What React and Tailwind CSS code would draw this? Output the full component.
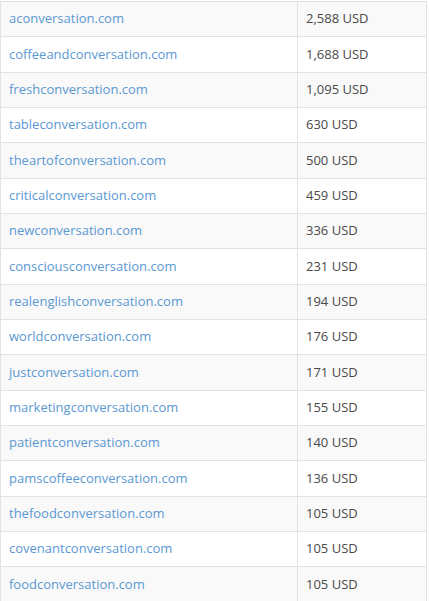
const rows = [
  ["aconversation.com", "2,588 USD"],
  ["coffeeandconversation.com", "1,688 USD"],
  ["freshconversation.com", "1,095 USD"],
  ["tableconversation.com", "630 USD"],
  ["theartofconversation.com", "500 USD"],
  ["criticalconversation.com", "459 USD"],
  ["newconversation.com", "336 USD"],
  ["consciousconversation.com", "231 USD"],
  ["realenglishconversation.com", "194 USD"],
  ["worldconversation.com", "176 USD"],
  ["justconversation.com", "171 USD"],
  ["marketingconversation.com", "155 USD"],
  ["patientconversation.com", "140 USD"],
  ["pamscoffeeconversation.com", "136 USD"],
  ["thefoodconversation.com", "105 USD"],
  ["covenantconversation.com", "105 USD"],
  ["foodconversation.com", "105 USD"],
];

export default function App() {
  return (
    <div className="bg-white h-[601px] overflow-hidden pt-px font-['Open_Sans',sans-serif] text-[13px]">
      <table className="w-[427px] border-collapse border border-[#e2e2e2]">
        <tbody>
          {rows.map(([domain, price], i) => (
            <tr
              key={domain}
              className={i % 2 === 0 ? "bg-[#f9f9f9] h-[35.33px]" : "bg-white h-[35.33px]"}
            >
              <td className="w-[297px] border border-[#e2e2e2] px-2 align-middle">
                <a href="#" className="text-[#5b98d2]">
                  {domain}
                </a>
              </td>
              <td className="border border-[#e2e2e2] px-2 align-middle text-[#4a4a4a]">
                {price}
              </td>
            </tr>
          ))}
        </tbody>
      </table>
    </div>
  );
}
